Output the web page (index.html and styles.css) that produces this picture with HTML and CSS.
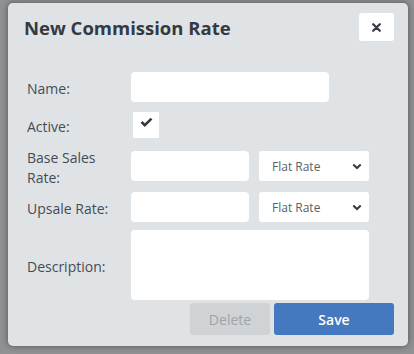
FILE: index.html
```html
<!DOCTYPE html>
<html>
<head>
<meta charset="utf-8">
<link rel="stylesheet" href="styles.css">
</head>
<body>
<div class="dialog">
  <div class="header">
    <h1 class="title">New Commission Rate</h1>
    <button class="close" aria-label="Close">
      <svg width="9" height="9" viewBox="0 0 9 9"><path d="M1.2 1.2 L7.8 7.8 M7.8 1.2 L1.2 7.8" stroke="#343a40" stroke-width="2.2" stroke-linecap="round"/></svg>
    </button>
  </div>
  <div class="form">
    <div class="row row-name">
      <label class="label">Name:</label>
      <div class="input wide"></div>
    </div>
    <div class="row row-active">
      <label class="label">Active:</label>
      <div class="checkbox">
        <svg width="13" height="10" viewBox="0 0 13 10"><path d="M1.5 5 L4.8 8.2 L11.5 1.6" fill="none" stroke="#343a40" stroke-width="2.6" stroke-linejoin="miter"/></svg>
      </div>
    </div>
    <div class="row row-base">
      <label class="label">Base Sales Rate:</label>
      <div class="input short"></div>
      <div class="select"><span>Flat Rate</span>
        <svg width="10" height="7" viewBox="0 0 10 7"><path d="M1.3 1.5 L5 5 L8.7 1.5" fill="none" stroke="#343a40" stroke-width="2"/></svg>
      </div>
    </div>
    <div class="row row-upsale">
      <label class="label">Upsale Rate:</label>
      <div class="input short"></div>
      <div class="select"><span>Flat Rate</span>
        <svg width="10" height="7" viewBox="0 0 10 7"><path d="M1.3 1.5 L5 5 L8.7 1.5" fill="none" stroke="#343a40" stroke-width="2"/></svg>
      </div>
    </div>
    <div class="row row-desc">
      <label class="label">Description:</label>
      <div class="textarea"></div>
    </div>
    <div class="actions">
      <button class="btn btn-delete">Delete</button>
      <button class="btn btn-save">Save</button>
    </div>
  </div>
</div>
</body>
</html>
```
FILE: styles.css
```css
html, body {
  margin: 0;
  padding: 0;
}
body {
  background: #8f9295;
  width: 414px;
  height: 354px;
  overflow: hidden;
  font-family: "Open Sans", "Noto Sans", sans-serif;
}
.dialog {
  margin: 3px 0 0 8px;
  width: 400px;
  height: 343px;
  box-sizing: border-box;
  background: #dfe3e6;
  border-radius: 5px;
  box-shadow: 0 0 6px rgba(0,0,0,0.45);
}
.header {
  display: flex;
  justify-content: space-between;
  align-items: flex-start;
  padding: 10px 14px 0 16px;
  height: 62px;
  box-sizing: border-box;
}
.title {
  margin: 0;
  font-size: 18.5px;
  font-weight: 700;
  color: #343a40;
  line-height: 28px;
  padding-top: 1px;
}
.close {
  width: 35px;
  height: 28px;
  margin-top: 0;
  background: #fff;
  border: none;
  border-radius: 3px;
  padding: 0;
  display: flex;
  align-items: center;
  justify-content: center;
}
.form {
  padding: 7px 0 0 19px;
}
.row {
  display: flex;
  align-items: center;
  height: 30px;
}
.label {
  width: 104px;
  flex: none;
  padding-right: 10px;
  box-sizing: border-box;
  font-size: 14px;
  line-height: 20px;
  color: #454c53;
  padding-top: 3px;
}
.input, .select, .textarea {
  background: #fff;
  border-radius: 4px;
  height: 30px;
}
.wide { width: 198px; }
.short { width: 118px; }
.select {
  width: 110px;
  margin-left: 10px;
  border-radius: 3px;
  display: flex;
  align-items: center;
  justify-content: space-between;
  padding: 0 7px 0 13px;
  box-sizing: border-box;
  font-size: 12px;
  color: #5a5f64;
}
.select span { padding-top: 1px; }
.row-active { margin-top: 10px; height: 26px; }
.checkbox {
  width: 26px;
  height: 26px;
  margin-left: 2px;
  background: #fff;
  display: flex;
  align-items: center;
  justify-content: center;
  padding-bottom: 6px;
  box-sizing: border-box;
}
.row-base { margin-top: 13px; }
.row-upsale { margin-top: 11px; }
.row-desc { margin-top: 8px; height: 70px; }
.textarea {
  width: 238px;
  height: 70px;
}
.actions {
  display: flex;
  justify-content: flex-end;
  gap: 4px;
  margin-top: 3px;
  padding-right: 14px;
}
.btn {
  height: 32px;
  border: none;
  border-radius: 3px;
  font-family: "Open Sans", "Noto Sans", sans-serif;
  font-size: 14px;
  padding: 0;
}
.btn-delete {
  width: 80px;
  background: #d0d3d6;
  color: #a0a3a7;
}
.btn-save {
  width: 120px;
  background: #4478bf;
  color: #fff;
  font-weight: 600;
}
```
